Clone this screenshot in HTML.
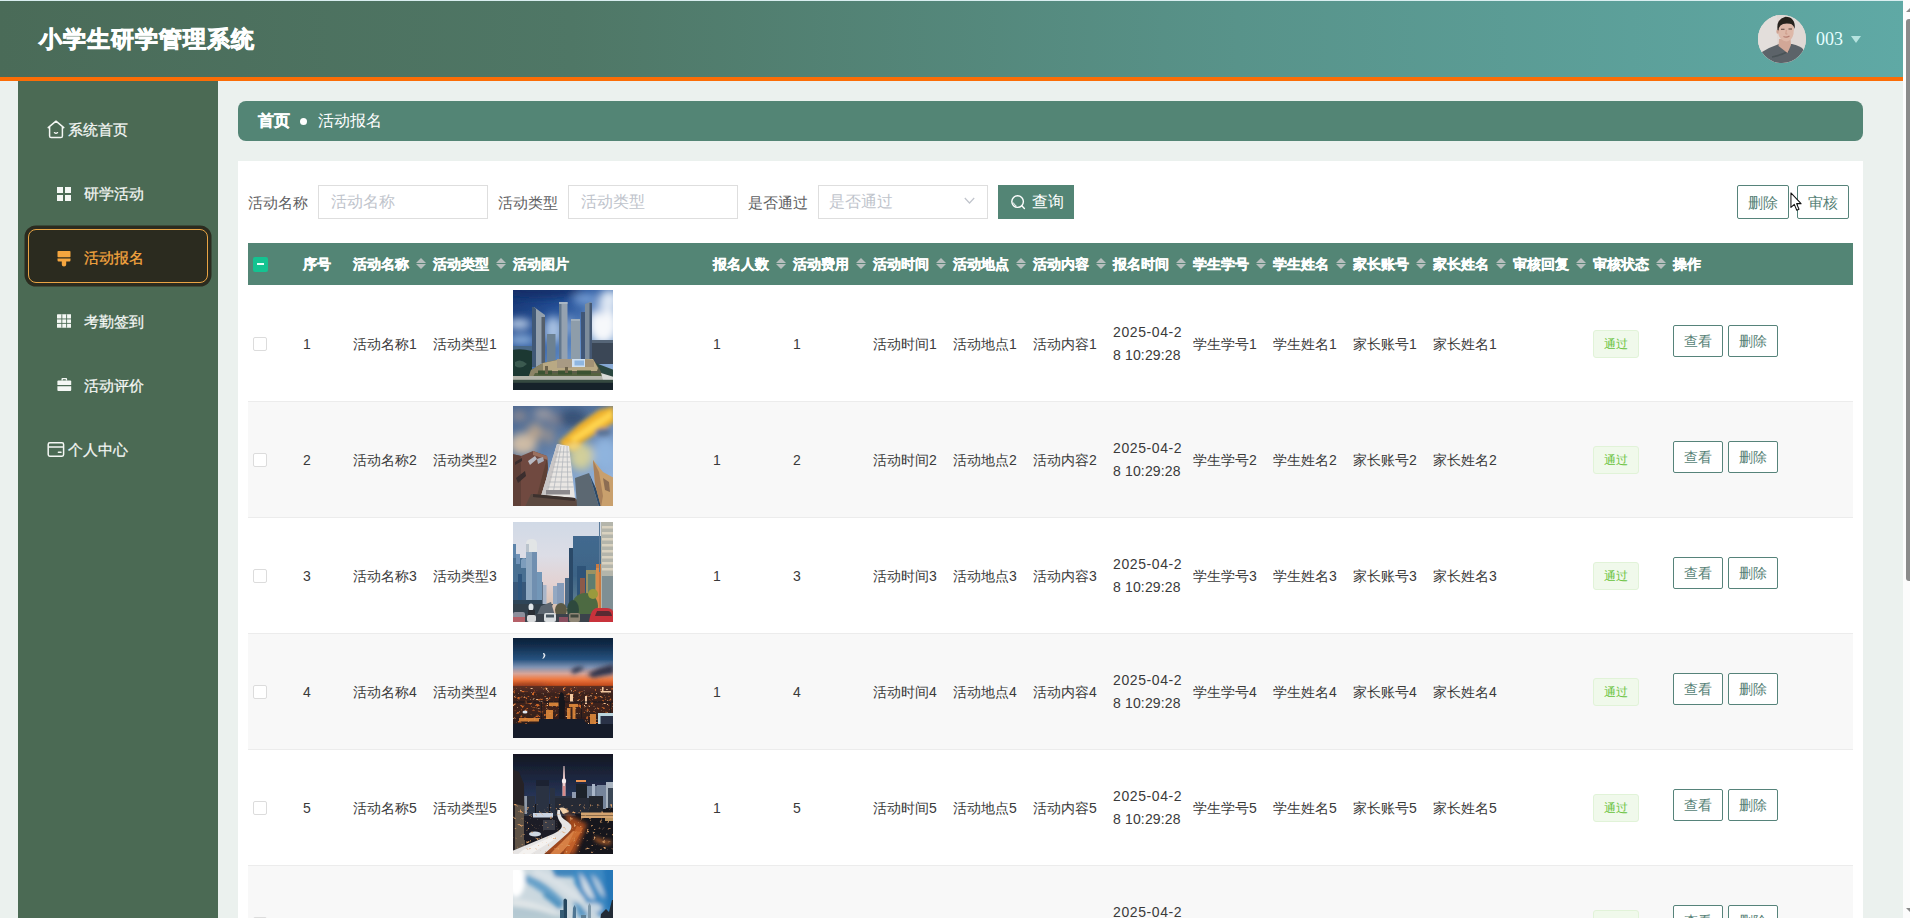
<!DOCTYPE html>
<html lang="zh">
<head>
<meta charset="utf-8">
<title>小学生研学管理系统</title>
<style>
*{box-sizing:border-box;margin:0;padding:0}
html,body{width:1910px;height:918px;overflow:hidden;background:#ebf1ee;font-family:"Liberation Sans",sans-serif;}
body{position:relative}
.abs{position:absolute}
#hdr{position:absolute;left:0;top:0;width:1903px;height:81px;background:linear-gradient(90deg,#4a6b58 0%,#4f7766 30%,#58938a 65%,#5fa9a5 100%);border-bottom:4px solid #fb6d06;border-top:1px solid #d9eef0}
#title{position:absolute;left:38.5px;top:20.5px;font-size:23px;letter-spacing:1px;font-weight:bold;color:#fff;line-height:36px;white-space:nowrap;-webkit-text-stroke:.8px #fff}
#avatar{position:absolute;left:1758px;top:15px;width:48px;height:48px;border-radius:50%;overflow:hidden;background:#e3dcd8}
#uname{position:absolute;left:1816px;top:28px;font-family:"Liberation Serif",serif;font-size:18px;line-height:22px;color:#e6ffff}
#ucaret{position:absolute;left:1851px;top:36px;width:0;height:0;border-left:5px solid transparent;border-right:5px solid transparent;border-top:7px solid #b5e3df}
#sbar{position:absolute;left:1903px;top:0;width:7px;height:918px;background:#fcfcfc;overflow:hidden}
.sarr{position:absolute;left:3px;width:0;height:0;border-left:4.5px solid transparent;border-right:4.5px solid transparent}
#sthumb{position:absolute;left:3px;top:19px;width:6px;height:562px;background:#8b8b8b;border-radius:4px}
#side{position:absolute;left:18px;top:81px;width:200px;height:837px;background:#4b6a54}
.mi{position:absolute;left:0;width:200px;height:30px;color:#f4f7f4;font-size:15px;line-height:30px;white-space:nowrap;-webkit-text-stroke:.25px currentColor}
.mi span{position:absolute;top:0}
.mi svg{position:absolute}
#act{position:absolute;left:10px;top:148px;width:180px;height:54px;background:#2b2b1f;border:1px solid #e9a444;border-radius:8px;box-shadow:0 0 0 3.5px #2b2b1f}
#crumb{position:absolute;left:238px;top:101px;width:1625px;height:40px;background:#538575;border-radius:8px;color:#fff;font-size:16px;line-height:40px;white-space:nowrap}
#panel{position:absolute;left:238px;top:161px;width:1625px;height:757px;background:#fff}
.lbl{position:absolute;top:186px;height:34px;line-height:34px;font-size:15px;color:#5e6062;white-space:nowrap}
.inp{position:absolute;top:185px;width:170px;height:34px;border:1px solid #dedede;background:#fff;font-size:16px;line-height:32px;color:#c0c4cc;padding-left:12px;white-space:nowrap}
.btn{position:absolute;border:1px solid #56837a;color:#567f76;background:#fff;border-radius:2px;text-align:center;white-space:nowrap}
#thead{position:absolute;left:248px;top:243px;width:1605px;height:41.5px;background:#538575}
.th{position:absolute;top:0;height:42px;line-height:42px;font-size:14px;font-weight:bold;color:#fff;white-space:nowrap;-webkit-text-stroke:.35px #fff}
.ct{position:absolute;width:0;height:0;border-left:5px solid transparent;border-right:5px solid transparent}
.row{position:absolute;left:248px;width:1605px;height:116px;border-bottom:1px solid #ececec;background:#fff}
.row.alt{background:#f8f8f8}
.td{position:absolute;top:46px;height:24px;line-height:24px;font-size:14px;color:#3a3a3a;white-space:nowrap}
.cb{position:absolute;left:5px;top:51px;width:14px;height:14px;border:1px solid #dcdcdc;border-radius:2px;background:#fff}
.img{position:absolute;left:265px;top:4px;width:100px;height:100px;overflow:hidden}
.tag{position:absolute;left:1345px;top:44px;width:46px;height:28px;border:1px solid #e1f3d8;background:#f0f9eb;border-radius:3px;color:#67c23a;font-size:12px;line-height:27px;text-align:center}
.rb{top:39px;width:50px;height:32px;line-height:30px;font-size:14px}
</style>
</head>
<body>
<div id="hdr"></div>
<div id="title">小学生研学管理系统</div>
<div id="avatar"><svg width="48" height="48" viewBox="0 0 48 48"><defs><filter id="avb"><feGaussianBlur stdDeviation=".7"/></filter></defs><rect width="48" height="48" fill="#e1d9d5"/><g filter="url(#avb)">
<rect x="0" y="0" width="19" height="48" fill="#e3dedb"/>
<path d="M3 50 L4 37 Q12 32 21 29 L34 29 Q42 31 45 34 L47 50 Z" fill="#5c6469"/>
<path d="M14 42 Q24 40 31 36" stroke="#4a5257" stroke-width="1.5" fill="none"/>
<path d="M21 24 H32.500 L33 30 L29.500 38 L20.500 31 Z" fill="#d2a797"/>
<path d="M19.700 12 Q20 7 28 7 Q36 7 36 12 L35.500 19 Q34 26 28.500 26.500 Q22 26 20.300 19 Z" fill="#deb8a8"/>
<ellipse cx="19.600" cy="16.500" rx="1.200" ry="2.200" fill="#cfa392"/>
<path d="M19.600 15 Q18 4 27.500 1.800 Q37.500 2 36.800 14 Q35.500 9.500 32 8.800 Q25 8 22.500 10.500 Q20.800 12 20.600 15.500 Z" fill="#25221f"/>
<path d="M23 14.200 H26.500 M30.500 14 H34" stroke="#5a4238" stroke-width="1.100"/>
<path d="M25.500 21.500 Q28.500 23 31.500 21" stroke="#b57d70" stroke-width="1.100" fill="none"/>
<path d="M28.300 15 L27.800 19 H29.500" stroke="#c99683" stroke-width=".8" fill="none"/>
</g></svg></div>
<div id="uname">003</div>
<div id="ucaret"></div>
<div id="sbar"><div class="sarr" style="top:7.5px;border-bottom:4.5px solid #8b8b8b"></div><div id="sthumb"></div><div class="sarr" style="top:908px;border-top:4.5px solid #8b8b8b"></div></div>
<div id="side">
<div id="act"></div>
<div class="mi" style="top:34px;color:#f4f7f4"><svg style="left:29px;top:5px" width="18" height="19" viewBox="0 0 18 19" fill="none" stroke="#f4f7f4" stroke-width="1.5" stroke-linejoin="round" stroke-linecap="round"><path d="M1.2 7.6 L9 1.2 L16.8 7.6 M2.6 6.6 V16 Q2.6 17.6 4.2 17.6 H13.8 Q15.4 17.6 15.4 16 V6.6"/><path d="M7.4 12.6 Q9 14 10.6 12.6" stroke-width="1.3"/></svg><span style="left:50px">系统首页</span></div>
<div class="mi" style="top:98px;color:#f4f7f4"><svg style="left:39px;top:8px" width="14" height="14" viewBox="0 0 14 14" fill="#f4f7f4"><rect x="0" y="0" width="6" height="6"/><rect x="8" y="0" width="6" height="6"/><rect x="0" y="8" width="6" height="6"/><rect x="8" y="8" width="6" height="6"/></svg><span style="left:66px">研学活动</span></div>
<div class="mi" style="top:162px;color:#f5a63f"><svg style="left:39px;top:8px" width="14" height="16" viewBox="0 0 14 16" fill="#f5a63f"><rect x="0.5" y="0" width="13" height="6.2" rx="0.8"/><path d="M0.5 7.4 H13.5 V9.2 Q13.5 10.4 12.3 10.4 H9.2 V13.6 Q9.2 15.6 7 15.6 Q4.8 15.6 4.8 13.6 V10.4 H1.7 Q0.5 10.4 0.5 9.2 Z"/></svg><span style="left:66px">活动报名</span></div>
<div class="mi" style="top:226px;color:#f4f7f4"><svg style="left:39px;top:7px" width="14.4" height="14" viewBox="0 0 15 14" fill="#f4f7f4"><rect x="0" y="0" width="15" height="14" rx="0.6"/><g fill="#4b6a54"><rect x="4.6" y="0" width="0.9" height="14"/><rect x="9.6" y="0" width="0.9" height="14"/><rect x="0" y="4.4" width="15" height="0.9"/><rect x="0" y="9" width="15" height="0.9"/></g></svg><span style="left:66px">考勤签到</span></div>
<div class="mi" style="top:290px;color:#f4f7f4"><svg style="left:39px;top:6px" width="14.6" height="15" viewBox="0 0 15 15" fill="#f4f7f4"><path d="M4.6 3.4 V1.8 Q4.6 0.8 5.6 0.8 H9.4 Q10.4 0.8 10.4 1.8 V3.4 H9 V2.2 H6 V3.4 Z"/><path d="M0.4 4.4 Q0.4 3.4 1.4 3.4 H13.6 Q14.6 3.4 14.6 4.4 V8 H0.4 Z"/><path d="M0.4 9.2 H14.6 V13.2 Q14.6 14.2 13.6 14.2 H1.4 Q0.4 14.2 0.4 13.2 Z"/></svg><span style="left:66px">活动评价</span></div>
<div class="mi" style="top:354px;color:#f4f7f4"><svg style="left:29px;top:6px" width="18" height="17" viewBox="0 0 18 17" fill="none" stroke="#f4f7f4" stroke-width="1.5" stroke-linejoin="round"><rect x="1.2" y="1.8" width="15.4" height="13.4" rx="1.6"/><path d="M1.2 6 H16.6"/><path d="M11.4 11.2 H14" stroke-linecap="round"/></svg><span style="left:50px">个人中心</span></div>
</div>
<div id="crumb"><span style="position:absolute;left:20px;font-weight:bold;font-size:16px;-webkit-text-stroke:.3px #fff">首页</span><span style="position:absolute;left:62px;top:17px;width:7px;height:7px;border-radius:50%;background:#fff"></span><span style="position:absolute;left:80px;font-size:16px">活动报名</span></div>
<div id="panel"></div>
<div class="lbl" style="left:248px">活动名称</div>
<div class="inp" style="left:318px">活动名称</div>
<div class="lbl" style="left:498px">活动类型</div>
<div class="inp" style="left:568px">活动类型</div>
<div class="lbl" style="left:748px">是否通过</div>
<div class="inp" style="left:818px;padding-left:10px">是否通过<svg style="position:absolute;left:145px;top:11px" width="11" height="8" viewBox="0 0 11 8" fill="none" stroke="#c0c4cc" stroke-width="1.2"><path d="M0.8 1 L5.5 6 L10.2 1"/></svg></div>
<div class="abs" style="left:998px;top:185px;width:76px;height:34px;background:#538575;color:#fff;font-size:16px;line-height:34px;white-space:nowrap"><svg style="position:absolute;left:12px;top:9px" width="16" height="16" viewBox="0 0 16 16" fill="none" stroke="#fff" stroke-width="1.4"><circle cx="7.6" cy="7.6" r="5.8"/><path d="M11.8 11.8 L14.4 14.4" stroke-linecap="round"/><path d="M3.4 8.6 Q4 11.2 6.4 11.8" stroke-width="1"/></svg><span style="position:absolute;left:34px">查询</span></div>
<div class="btn" style="left:1737px;top:185px;width:52px;height:34px;line-height:33.5px;font-size:15px">删除</div>
<div class="btn" style="left:1797px;top:185px;width:52px;height:34px;line-height:33.5px;font-size:15px">审核</div>
<svg class="abs" style="left:1789.6px;top:192.4px" width="12.2" height="19.7" viewBox="0 0 13 21"><path d="M1 1 V16.5 L4.6 13.2 L7.2 19.4 L9.6 18.4 L7 12.4 H11.8 Z" fill="#fff" stroke="#111" stroke-width="1.1" stroke-linejoin="round"/></svg>
<div id="thead">
<div class="abs" style="left:5px;top:14px;width:14.5px;height:14.5px;background:#14c391;border-radius:2px"><div class="abs" style="left:4px;top:6px;width:6.5px;height:2px;background:#e9fff8"></div></div>
<div class="th" style="left:55px">序号</div>
<div class="th" style="left:105px">活动名称</div>
<div class="ct" style="left:168px;top:14.5px;border-bottom:5px solid #b6bebd"></div>
<div class="ct" style="left:168px;top:21px;border-top:5px solid #b6bebd"></div>
<div class="th" style="left:185px">活动类型</div>
<div class="ct" style="left:248px;top:14.5px;border-bottom:5px solid #b6bebd"></div>
<div class="ct" style="left:248px;top:21px;border-top:5px solid #b6bebd"></div>
<div class="th" style="left:265px">活动图片</div>
<div class="th" style="left:465px">报名人数</div>
<div class="ct" style="left:528px;top:14.5px;border-bottom:5px solid #b6bebd"></div>
<div class="ct" style="left:528px;top:21px;border-top:5px solid #b6bebd"></div>
<div class="th" style="left:545px">活动费用</div>
<div class="ct" style="left:608px;top:14.5px;border-bottom:5px solid #b6bebd"></div>
<div class="ct" style="left:608px;top:21px;border-top:5px solid #b6bebd"></div>
<div class="th" style="left:625px">活动时间</div>
<div class="ct" style="left:688px;top:14.5px;border-bottom:5px solid #b6bebd"></div>
<div class="ct" style="left:688px;top:21px;border-top:5px solid #b6bebd"></div>
<div class="th" style="left:705px">活动地点</div>
<div class="ct" style="left:768px;top:14.5px;border-bottom:5px solid #b6bebd"></div>
<div class="ct" style="left:768px;top:21px;border-top:5px solid #b6bebd"></div>
<div class="th" style="left:785px">活动内容</div>
<div class="ct" style="left:848px;top:14.5px;border-bottom:5px solid #b6bebd"></div>
<div class="ct" style="left:848px;top:21px;border-top:5px solid #b6bebd"></div>
<div class="th" style="left:865px">报名时间</div>
<div class="ct" style="left:928px;top:14.5px;border-bottom:5px solid #b6bebd"></div>
<div class="ct" style="left:928px;top:21px;border-top:5px solid #b6bebd"></div>
<div class="th" style="left:945px">学生学号</div>
<div class="ct" style="left:1008px;top:14.5px;border-bottom:5px solid #b6bebd"></div>
<div class="ct" style="left:1008px;top:21px;border-top:5px solid #b6bebd"></div>
<div class="th" style="left:1025px">学生姓名</div>
<div class="ct" style="left:1088px;top:14.5px;border-bottom:5px solid #b6bebd"></div>
<div class="ct" style="left:1088px;top:21px;border-top:5px solid #b6bebd"></div>
<div class="th" style="left:1105px">家长账号</div>
<div class="ct" style="left:1168px;top:14.5px;border-bottom:5px solid #b6bebd"></div>
<div class="ct" style="left:1168px;top:21px;border-top:5px solid #b6bebd"></div>
<div class="th" style="left:1185px">家长姓名</div>
<div class="ct" style="left:1248px;top:14.5px;border-bottom:5px solid #b6bebd"></div>
<div class="ct" style="left:1248px;top:21px;border-top:5px solid #b6bebd"></div>
<div class="th" style="left:1265px">审核回复</div>
<div class="ct" style="left:1328px;top:14.5px;border-bottom:5px solid #b6bebd"></div>
<div class="ct" style="left:1328px;top:21px;border-top:5px solid #b6bebd"></div>
<div class="th" style="left:1345px">审核状态</div>
<div class="ct" style="left:1408px;top:14.5px;border-bottom:5px solid #b6bebd"></div>
<div class="ct" style="left:1408px;top:21px;border-top:5px solid #b6bebd"></div>
<div class="th" style="left:1425px">操作</div>
</div>
<div class="row" style="top:286px">
<div class="cb"></div>
<div class="td" style="left:55px">1</div>
<div class="td" style="left:105px">活动名称1</div>
<div class="td" style="left:185px">活动类型1</div>
<div class="img"><svg width="100" height="100" viewBox="0 0 100 100"><defs><filter id="p1b" x="-5%" y="-5%" width="110%" height="110%"><feGaussianBlur stdDeviation="0.7"/></filter><filter id="p1B" x="-20%" y="-20%" width="140%" height="140%"><feGaussianBlur stdDeviation="4"/></filter><filter id="p1M" x="-20%" y="-20%" width="140%" height="140%"><feGaussianBlur stdDeviation="2"/></filter><linearGradient id="p1s" x1="0" y1="0" x2="1" y2="1"><stop offset="0" stop-color="#122e68"/><stop offset=".35" stop-color="#27539a"/><stop offset=".6" stop-color="#628dc6"/><stop offset="1" stop-color="#a4bfe0"/></linearGradient></defs><rect width="100" height="100" fill="#888"/><g filter="url(#p1b)">
<rect x="-5" y="-5" width="110" height="110" fill="url(#p1s)"/>
<g filter="url(#p1B)">
<ellipse cx="30" cy="0" rx="40" ry="8" fill="#0f2c66" opacity=".8"/>
<ellipse cx="90" cy="34" rx="15" ry="20" fill="#f6f8fb"/>
<ellipse cx="96" cy="10" rx="10" ry="10" fill="#dfe8f4"/>
<ellipse cx="72" cy="9" rx="12" ry="5" fill="#7fa6dc" opacity=".9"/>
<ellipse cx="84" cy="20" rx="8" ry="3" fill="#6f98d2" opacity=".9"/>
<ellipse cx="6" cy="34" rx="12" ry="5" fill="#bfd2ea"/>
<ellipse cx="40" cy="40" rx="9" ry="14" fill="#b4cbe8" opacity=".9"/>
<ellipse cx="56" cy="36" rx="4" ry="10" fill="#b4cbe8" opacity=".7"/>
<ellipse cx="8" cy="50" rx="14" ry="5" fill="#8fb2dc"/>
</g>
<rect x="79" y="50" width="22" height="24" fill="#3a4757"/>
<rect x="79" y="50" width="22" height="3" fill="#566678"/>
<path d="M-1 56 H19 V62 H-1 Z" fill="#4a6786"/>
<path d="M-1 60 Q8 58 19 61 V88 H-1 Z" fill="#1e3733"/>
<path d="M2 72 Q8 68 14 74 Q8 80 2 76 Z" fill="#3a5a50"/>
<path d="M80 72 L101 80 V90 H80 Z" fill="#2c463f"/>
<path d="M19 17 L21 17 L32 25 V77 H19 Z" fill="#93a0ad"/>
<path d="M19 17 L21 17 L23 19 V77 H19 Z" fill="#3f5876"/>
<rect x="28.500" y="27" width="3.500" height="46" fill="#555f6a"/>
<rect x="34" y="44" width="8.500" height="32" fill="#6c8192"/>
<rect x="46" y="12" width="8.500" height="57" fill="#95a2b0"/>
<rect x="46" y="12" width="2.500" height="57" fill="#64788e"/>
<rect x="46" y="12" width="8.500" height="2" fill="#a9b6c4"/>
<rect x="58" y="29" width="9" height="40" fill="#8e9daa"/>
<rect x="58" y="29" width="9" height="2" fill="#a2b0bd"/>
<rect x="68" y="22" width="4" height="47" fill="#3f5777"/>
<path d="M72 14 L77 12 L79 13 V69 H72 Z" fill="#7d8c9b"/>
<rect x="76.500" y="13" width="2.500" height="56" fill="#445973"/>
<path d="M18 80 L30 73 L44 70 L80 69 L86 78 L90 86 H16 Z" fill="#5a5c48"/><path d="M22 79 L30 73 L44 70 L80 69 L85 78 L84 81 H22 Z" fill="#b9a984"/>
<path d="M18 80 L30 73 L30 86 H16 Z" fill="#8c8466"/>
<rect x="44" y="69" width="15" height="9" fill="#a89a84"/>
<rect x="59" y="69" width="13" height="8" fill="#cfe0f2"/>
<rect x="61.500" y="70.500" width="9.500" height="5" fill="#8fb6e0"/>
<rect x="72" y="70" width="9" height="7" fill="#a39274"/>
<path d="M22 83 H88 L90 87 H20 Z" fill="#55623f"/>
<rect x="25" y="80.500" width="14" height="4" fill="#3a5230"/>
<rect x="45" y="80.500" width="14" height="4" fill="#3a5230"/>
<rect x="64" y="80.500" width="14" height="4" fill="#3a5230"/>
<rect x="32" y="76" width="3" height="8" fill="#6d644c"/><rect x="52" y="77" width="3" height="6" fill="#6d644c"/>
<path d="M-1 86 H88 L101 90 V94 H-1 Z" fill="#b3b4aa"/>
<path d="M88 83 L101 87 V93 L90 90 Z" fill="#d8dad6"/>
<rect x="-1" y="91.500" width="102" height="10" fill="#17242a"/>
<rect x="-1" y="89.800" width="102" height="3" fill="#34493f"/>
</g></svg></div>
<div class="td" style="left:465px">1</div>
<div class="td" style="left:545px">1</div>
<div class="td" style="left:625px">活动时间1</div>
<div class="td" style="left:705px">活动地点1</div>
<div class="td" style="left:785px">活动内容1</div>
<div class="td" style="left:865px;top:34.5px;height:48px;line-height:23.5px;letter-spacing:.6px">2025-04-2<br><span style="letter-spacing:.15px">8 10:29:28</span></div>
<div class="td" style="left:945px">学生学号1</div>
<div class="td" style="left:1025px">学生姓名1</div>
<div class="td" style="left:1105px">家长账号1</div>
<div class="td" style="left:1185px">家长姓名1</div>
<div class="tag">通过</div>
<div class="btn rb" style="left:1425px">查看</div>
<div class="btn rb" style="left:1480px">删除</div>
</div>
<div class="row alt" style="top:402px">
<div class="cb"></div>
<div class="td" style="left:55px">2</div>
<div class="td" style="left:105px">活动名称2</div>
<div class="td" style="left:185px">活动类型2</div>
<div class="img"><svg width="100" height="100" viewBox="0 0 100 100"><defs><filter id="p2b" x="-5%" y="-5%" width="110%" height="110%"><feGaussianBlur stdDeviation="0.7"/></filter><filter id="p2B" x="-20%" y="-20%" width="140%" height="140%"><feGaussianBlur stdDeviation="4"/></filter><filter id="p2M" x="-20%" y="-20%" width="140%" height="140%"><feGaussianBlur stdDeviation="2"/></filter><linearGradient id="p2s" x1="0" y1="0" x2=".6" y2="1"><stop offset="0" stop-color="#4a6690"/><stop offset=".4" stop-color="#55739c"/><stop offset=".7" stop-color="#7b9cc7"/><stop offset="1" stop-color="#9dbde4"/></linearGradient></defs><rect width="100" height="100" fill="#888"/><g filter="url(#p2b)">
<rect x="-5" y="-5" width="110" height="110" fill="url(#p2s)"/>
<g filter="url(#p2B)">
<ellipse cx="10" cy="38" rx="14" ry="11" fill="#cdbba6"/><ellipse cx="30" cy="8" rx="10" ry="6" fill="#a9a3a4" opacity=".8"/>
<ellipse cx="22" cy="26" rx="8" ry="9" fill="#bca58e" opacity=".9"/>
<ellipse cx="6" cy="10" rx="8" ry="5" fill="#8f8a90"/>
<ellipse cx="42" cy="14" rx="8" ry="5" fill="#8c8790" opacity=".8"/>
<ellipse cx="36" cy="30" rx="6" ry="8" fill="#9f9590" opacity=".8"/>
<ellipse cx="60" cy="12" rx="14" ry="9" fill="#2f4a6e" opacity=".8"/>
<ellipse cx="68" cy="50" rx="12" ry="14" fill="#dcd596" opacity=".9"/>
<ellipse cx="92" cy="48" rx="12" ry="16" fill="#8fb4de"/>
</g><g filter="url(#p2M)">
<path d="M46 36 L66 18 L86 4 L101 0 L102 16 L84 27 L62 41 L50 42 Z" fill="#eeb02c"/>
<path d="M56 33 L80 16 L99 4 L100 11 L80 25 L62 36 Z" fill="#ffd44e"/>
<path d="M50 40 L62 36 L70 40 L60 46 Z" fill="#f0d274"/>
<ellipse cx="90" cy="26" rx="8" ry="4" fill="#5d7597"/>
</g>
<path d="M-1 48 L8 50 L20 45 L34 50 L35 62 L30 90 L18 101 H-1 Z" fill="#6f4a3f"/><path d="M34 52 L35 62 L30 90 L24 90 Z" fill="#5f4036"/>
<path d="M-1 48 L8 50 L8 101 H-1 Z" fill="#5e4038"/>
<path d="M20 45 L34 50 L35 54 L20 49 Z" fill="#9a6f5e"/>
<path d="M15 55 L22 50 L24 53 L17 59 Z" fill="#b9b9c2"/><path d="M24 53 L30 51 L31 55 L25 58 Z" fill="#a9acb8"/>
<path d="M3 72 L12 65 L13 70 L5 77 Z" fill="#3a2d2e"/><path d="M2 56 L9 52 L9 55 L2 59 Z" fill="#3a2d2e"/>
<path d="M44 38 L56 40 L62 92 L28 90 Z" fill="#e9e6e3"/>
<path d="M44 38 L47 38.500 L34 90 L28 90 Z" fill="#c9c6c6"/>
<g stroke="#9aa0aa" stroke-width=".7" opacity=".75"><path d="M43 46 H56 M42 51 H57 M41 56 H57.500 M40 61 H58 M38.500 66 H58.500 M37 71 H59 M36 76 H60 M34.500 81 H60.500"/><path d="M48 40 L40 88 M51 40 L47 88 M54 40 L55 88"/></g>
<rect x="33" y="84" width="24" height="4.500" fill="#8d8a8e"/>
<path d="M18 88 L62 92 L72 101 H12 Z" fill="#5b4840"/>
<path d="M20 88 L62 92 L62 95 L20 91 Z" fill="#3e302e"/>
<path d="M62 72 L76 67 L86 101 H64 Z" fill="#5b6872"/>
<path d="M76 67 L86 101 H92 L80 76 Z" fill="#2f4a66"/>
<path d="M80 54 L90 66 L101 72 V101 H88 L82 78 Z" fill="#c9a06d"/>
<path d="M80 54 L86 66 L90 90 L88 101 L82 78 Z" fill="#a9805a"/>
<path d="M90 72 L96 76 L97 86 L92 84 Z" fill="#8c6d52"/>
</g></svg></div>
<div class="td" style="left:465px">1</div>
<div class="td" style="left:545px">2</div>
<div class="td" style="left:625px">活动时间2</div>
<div class="td" style="left:705px">活动地点2</div>
<div class="td" style="left:785px">活动内容2</div>
<div class="td" style="left:865px;top:34.5px;height:48px;line-height:23.5px;letter-spacing:.6px">2025-04-2<br><span style="letter-spacing:.15px">8 10:29:28</span></div>
<div class="td" style="left:945px">学生学号2</div>
<div class="td" style="left:1025px">学生姓名2</div>
<div class="td" style="left:1105px">家长账号2</div>
<div class="td" style="left:1185px">家长姓名2</div>
<div class="tag">通过</div>
<div class="btn rb" style="left:1425px">查看</div>
<div class="btn rb" style="left:1480px">删除</div>
</div>
<div class="row" style="top:518px">
<div class="cb"></div>
<div class="td" style="left:55px">3</div>
<div class="td" style="left:105px">活动名称3</div>
<div class="td" style="left:185px">活动类型3</div>
<div class="img"><svg width="100" height="100" viewBox="0 0 100 100"><defs><filter id="p3b" x="-5%" y="-5%" width="110%" height="110%"><feGaussianBlur stdDeviation="0.7"/></filter><filter id="p3B" x="-20%" y="-20%" width="140%" height="140%"><feGaussianBlur stdDeviation="4"/></filter><filter id="p3M" x="-20%" y="-20%" width="140%" height="140%"><feGaussianBlur stdDeviation="2"/></filter><linearGradient id="p3s" x1="0" y1="0" x2="0" y2="1"><stop offset="0" stop-color="#cfd9e6"/><stop offset=".35" stop-color="#dcdde6"/><stop offset=".6" stop-color="#e3d2d2"/><stop offset=".85" stop-color="#d9c0ae"/></linearGradient>
<linearGradient id="p3g" x1="0" y1="0" x2="0" y2="1"><stop offset="0" stop-color="#42698f"/><stop offset=".6" stop-color="#3d6486"/><stop offset="1" stop-color="#5b7b90"/></linearGradient></defs><rect width="100" height="100" fill="#888"/><g filter="url(#p3b)">
<rect x="-5" y="-5" width="110" height="110" fill="url(#p3s)"/>
<rect x="30" y="63" width="3.500" height="20" fill="#a9b6ca"/>
<rect x="40" y="64" width="4" height="18" fill="#93a8c2"/><rect x="44" y="61" width="7" height="22" fill="#869cba"/>
<rect x="52" y="56" width="5" height="30" fill="#4f6a86"/>
<rect x="0" y="22" width="3" height="70" fill="#5d84aa"/>
<rect x="0" y="36" width="16" height="50" fill="#4a6f92"/><rect x="0" y="60" width="30" height="24" fill="#2f5070" opacity=".7"/>
<rect x="3" y="32" width="4" height="10" fill="#6f93b8"/>
<path d="M8 38 Q11 34 14 38 V46 H8 Z" fill="#7d9dbc"/>
<rect x="5" y="52" width="4" height="30" fill="#2f567e"/>
<path d="M13 22 Q13 17 18.500 17 Q24 17 24 22 V78 H13 Z" fill="#e2e5e6"/><rect x="13" y="22" width="3" height="10" fill="#b9c3cc"/>
<rect x="13" y="30" width="11" height="50" fill="#8fa9c2"/>
<rect x="19" y="30" width="5" height="50" fill="#6f8fb0"/>
<rect x="24" y="50" width="5" height="32" fill="#7397b8"/>
<rect x="56" y="26" width="4.500" height="56" fill="#2b4a68"/>
<rect x="60" y="14" width="28" height="66" fill="url(#p3g)"/>
<rect x="64" y="44" width="9" height="34" fill="#2f5378"/>
<rect x="67" y="56" width="5" height="22" fill="#8c5a4a"/>
<rect x="73" y="48" width="10" height="30" fill="#9a9264"/>
<rect x="75" y="52" width="7" height="22" fill="#5f7d70"/>
<rect x="83" y="42" width="7" height="48" fill="#c87a42"/>
<rect x="83" y="46" width="3" height="44" fill="#d98c4c"/>
<rect x="88" y="-1" width="13" height="92" fill="#b4b5ab"/>
<g fill="#d9d2c0"><rect x="89" y="4" width="12" height="2.500"/><rect x="89" y="10" width="12" height="2.500"/><rect x="89" y="16" width="12" height="2.500"/><rect x="89" y="22" width="12" height="2.500"/><rect x="89" y="28" width="12" height="2.500"/><rect x="89" y="34" width="12" height="2.500"/><rect x="89" y="40" width="12" height="2.500"/><rect x="89" y="46" width="12" height="2.500"/></g>
<rect x="89" y="54" width="12" height="36" fill="#7f8f94"/>
<rect x="86" y="0" width="1" height="50" fill="#5a7a9a"/>
<ellipse cx="72" cy="84" rx="13" ry="13" fill="#4d6a42"/>
<ellipse cx="80" cy="72" rx="5" ry="5" fill="#9a9a3c"/>
<ellipse cx="60" cy="88" rx="6" ry="10" fill="#2f4a3c"/>
<ellipse cx="48" cy="88" rx="6" ry="7" fill="#5b5a44"/>
<rect x="-1" y="78" width="30" height="14" fill="#2f4458"/>
<path d="M-1 82 H40 L30 101 H-1 Z" fill="#33404c"/>
<path d="M28 84 L38 80 L44 101 H20 Z" fill="#5d6670"/>
<rect x="-1" y="92" width="102" height="9" fill="#3b434c"/>
<rect x="0" y="90" width="12" height="10" rx="2" fill="#8d8f9c"/><rect x="0" y="95" width="12" height="5" fill="#b56068"/>
<ellipse cx="18" cy="85" rx="2.500" ry="3.500" fill="#dfe6ea"/><rect x="15" y="88" width="7" height="9" fill="#2a2f36"/>
<rect x="14" y="93" width="9" height="7" rx="2" fill="#d8dadc"/>
<rect x="31" y="91" width="12" height="9" rx="2" fill="#d9dde0"/><rect x="33" y="92.500" width="8" height="3" fill="#4a5660"/>
<rect x="46" y="95" width="9" height="5" fill="#8a5060"/>
<rect x="56" y="91" width="11" height="9" rx="2" fill="#8f8674"/><rect x="57.500" y="92.500" width="8" height="3" fill="#3f463e"/>
<path d="M76 100 Q78 86 84 86 H94 Q100 86 101 92 V101 H76 Z" fill="#c8333a"/>
<path d="M84 89 H95 Q98 89 99 94 H82 Z" fill="#5a2a30"/>
</g></svg></div>
<div class="td" style="left:465px">1</div>
<div class="td" style="left:545px">3</div>
<div class="td" style="left:625px">活动时间3</div>
<div class="td" style="left:705px">活动地点3</div>
<div class="td" style="left:785px">活动内容3</div>
<div class="td" style="left:865px;top:34.5px;height:48px;line-height:23.5px;letter-spacing:.6px">2025-04-2<br><span style="letter-spacing:.15px">8 10:29:28</span></div>
<div class="td" style="left:945px">学生学号3</div>
<div class="td" style="left:1025px">学生姓名3</div>
<div class="td" style="left:1105px">家长账号3</div>
<div class="td" style="left:1185px">家长姓名3</div>
<div class="tag">通过</div>
<div class="btn rb" style="left:1425px">查看</div>
<div class="btn rb" style="left:1480px">删除</div>
</div>
<div class="row alt" style="top:634px">
<div class="cb"></div>
<div class="td" style="left:55px">4</div>
<div class="td" style="left:105px">活动名称4</div>
<div class="td" style="left:185px">活动类型4</div>
<div class="img"><svg width="100" height="100" viewBox="0 0 100 100"><defs><filter id="p4b" x="-5%" y="-5%" width="110%" height="110%"><feGaussianBlur stdDeviation="0.7"/></filter><filter id="p4B" x="-20%" y="-20%" width="140%" height="140%"><feGaussianBlur stdDeviation="4"/></filter><filter id="p4M" x="-20%" y="-20%" width="140%" height="140%"><feGaussianBlur stdDeviation="2"/></filter><linearGradient id="p4s" x1="0" y1="0" x2="0" y2="1"><stop offset="0" stop-color="#0c1b2e"/><stop offset=".12" stop-color="#122e4e"/><stop offset=".24" stop-color="#27527f"/><stop offset=".31" stop-color="#7f93b3"/><stop offset=".37" stop-color="#d9a597"/><stop offset=".42" stop-color="#ee7a42"/><stop offset=".47" stop-color="#c9501f"/><stop offset=".5" stop-color="#6d3020"/></linearGradient>
<linearGradient id="p4c" x1="0" y1="0" x2="0" y2="1"><stop offset="0" stop-color="#5d2f22"/><stop offset=".2" stop-color="#3b231f"/><stop offset=".6" stop-color="#3f241c"/><stop offset="1" stop-color="#241a1c"/></linearGradient>
<filter id="p4n" x="0" y="0" width="100%" height="100%" color-interpolation-filters="sRGB"><feTurbulence type="fractalNoise" baseFrequency="0.26 0.36" numOctaves="2" seed="7"/><feColorMatrix type="matrix" values="0 0 0 0 0.82  0 0 0 0 0.4  0 0 0 0 0.15  6 0 0 0 -3.55"/></filter>
<filter id="p4n2" x="0" y="0" width="100%" height="100%" color-interpolation-filters="sRGB"><feTurbulence type="fractalNoise" baseFrequency="0.3 0.4" numOctaves="2" seed="21"/><feColorMatrix type="matrix" values="0 0 0 0 0.96  0 0 0 0 0.78  0 0 0 0 0.6  0 7 0 0 -4.7"/></filter></defs><rect width="100" height="100" fill="#888"/><g filter="url(#p4b)">
<rect x="-5" y="-5" width="110" height="110" fill="url(#p4s)"/>
<g filter="url(#p4M)">
<path d="M58 32 Q66 26 72 30 Q66 34 60 36 Z" fill="#2b3550"/>
<path d="M74 36 Q88 28 101 26 V36 Q88 38 80 40 Z" fill="#33344c"/>
<path d="M0 47 Q20 45 40 47.500 L0 49 Z" fill="#7a3424"/>
</g>
<path d="M30.500 15 Q33.500 17.500 30 20.500 Q32 18 30.500 15 Z" fill="#f3f6fb" stroke="#f3f6fb" stroke-width=".8"/>
<rect x="-1" y="48" width="102" height="40" fill="url(#p4c)"/>
<rect x="-1" y="49" width="102" height="37" fill="#e0813a" filter="url(#p4n)"/>
<rect x="-1" y="49" width="102" height="37" fill="#f6d2a8" filter="url(#p4n2)"/>
<g filter="url(#p4b)">
<g fill="#e08a3c" opacity=".9"><rect x="36" y="64" width="10" height="4"/><rect x="56" y="66" width="9" height="3"/><rect x="33" y="72" width="7" height="9"/><rect x="54" y="70" width="3.500" height="14"/><rect x="59.500" y="68" width="3" height="16" /><rect x="77" y="76" width="6" height="10"/><rect x="6" y="80" width="20" height="3.500"/></g>
<g fill="#f2c9a2"><rect x="57" y="56" width="3" height="8"/><rect x="72" y="58" width="2" height="8"/><rect x="88" y="53" width="10" height="1.500"/><rect x="89" y="49" width="1.500" height="4"/></g>
<ellipse cx="12" cy="74" rx="2.500" ry="1.500" fill="#dfe8f2"/>
</g>
<rect x="-1" y="63.500" width="102" height="1" fill="#1c1820"/>
<rect x="28" y="64" width=".8" height="20" fill="#1c1820"/><rect x="68" y="64" width=".8" height="20" fill="#1c1820"/><rect x="97" y="64" width=".8" height="22" fill="#1c1820"/>
<path d="M46.500 56 Q48.500 52 50.500 56 L52 64 L51.500 82 H46 L45.500 64 Z" fill="#17141c"/>
<rect x="85" y="75" width="16" height="11" fill="#2b3346"/><path d="M85 75 H101 V78 H87.500 V86 H85 Z" fill="#bcd6de"/>
<path d="M28 81 H70 L74 86 H101 V101 H-1 V86 H24 Z" fill="#171b2b"/>
<rect x="-1" y="86" width="102" height="15" fill="#171b2b"/>
</g></svg></div>
<div class="td" style="left:465px">1</div>
<div class="td" style="left:545px">4</div>
<div class="td" style="left:625px">活动时间4</div>
<div class="td" style="left:705px">活动地点4</div>
<div class="td" style="left:785px">活动内容4</div>
<div class="td" style="left:865px;top:34.5px;height:48px;line-height:23.5px;letter-spacing:.6px">2025-04-2<br><span style="letter-spacing:.15px">8 10:29:28</span></div>
<div class="td" style="left:945px">学生学号4</div>
<div class="td" style="left:1025px">学生姓名4</div>
<div class="td" style="left:1105px">家长账号4</div>
<div class="td" style="left:1185px">家长姓名4</div>
<div class="tag">通过</div>
<div class="btn rb" style="left:1425px">查看</div>
<div class="btn rb" style="left:1480px">删除</div>
</div>
<div class="row" style="top:750px">
<div class="cb"></div>
<div class="td" style="left:55px">5</div>
<div class="td" style="left:105px">活动名称5</div>
<div class="td" style="left:185px">活动类型5</div>
<div class="img"><svg width="100" height="100" viewBox="0 0 100 100"><defs><filter id="p5b" x="-5%" y="-5%" width="110%" height="110%"><feGaussianBlur stdDeviation="0.7"/></filter><filter id="p5B" x="-20%" y="-20%" width="140%" height="140%"><feGaussianBlur stdDeviation="4"/></filter><filter id="p5M" x="-20%" y="-20%" width="140%" height="140%"><feGaussianBlur stdDeviation="2"/></filter><linearGradient id="p5s" x1="0" y1="0" x2="0" y2="1"><stop offset="0" stop-color="#12151f"/><stop offset=".2" stop-color="#1a2236"/><stop offset=".45" stop-color="#27365a"/><stop offset=".6" stop-color="#2a3450"/></linearGradient>
<filter id="p5n" x="0" y="0" width="100%" height="100%" color-interpolation-filters="sRGB"><feTurbulence type="fractalNoise" baseFrequency="0.3 0.3" numOctaves="2" seed="11"/><feColorMatrix type="matrix" values="0 0 0 0 0.86  0 0 0 0 0.62  0 0 0 0 0.4  6 0 0 0 -3.9"/></filter></defs><rect width="100" height="100" fill="#888"/><g filter="url(#p5b)">
<rect x="-5" y="-5" width="110" height="110" fill="url(#p5s)"/>
<rect x="-1" y="50" width="102" height="51" fill="#15161e"/>
<g fill="#2a3242"><rect x="10" y="42" width="12" height="24"/><rect x="23" y="26" width="13" height="36"/><rect x="37" y="34" width="5" height="28"/><rect x="42" y="42" width="20" height="20"/></g>
<rect x="10" y="42" width="4" height="18" fill="#8f99a8"/>
<rect x="23" y="26" width="13" height="6" fill="#1c2230"/>
<rect x="59" y="38" width="5" height="10" fill="#8f9bb0"/>
<rect x="63" y="30" width="11" height="26" fill="#1d212c"/>
<rect x="63" y="26" width="10" height="2" fill="#ec9452"/>
<rect x="74" y="32" width="10" height="16" fill="#6d7c92"/><rect x="79" y="30" width="3" height="12" fill="#a9b6c8"/>
<rect x="84" y="31" width="9" height="24" fill="#74849a"/>
<rect x="93" y="28" width="8" height="26" fill="#a9b4c0"/><rect x="95" y="34" width="6" height="20" fill="#3b4656"/>
<rect x="76" y="42" width="14" height="18" fill="#23262f"/>
<rect x="42" y="44" width="34" height="16" fill="#262a36"/>
<path d="M50.500 12 L51.500 12 L52 24 L53 27 L52.500 30 L52.500 42 H49.500 L49.500 30 L49 27 L50 24 Z" fill="#eccaca"/>
<ellipse cx="51" cy="27" rx="2.200" ry="2.200" fill="#f5eef0"/>
<rect x="49.800" y="32" width="2.400" height="10" fill="#d98a8a"/>
<path d="M-1 15 L6 18 L11 30 L12 96 L-1 101 Z" fill="#262425"/>
<path d="M2 50 L11 52 L12 92 L2 96 Z" fill="#5f5247"/>
<rect x="11" y="62" width="34" height="24" fill="#1c1e28"/>
<rect x="20" y="59" width="20" height="4.500" fill="#c9d3e2"/>
<rect x="30" y="66" width="12" height="10" fill="#3b3c46"/>
<ellipse cx="22" cy="80" rx="6" ry="2.500" fill="#cfd8e2"/>
<rect x="68" y="58.500" width="33" height="5.500" fill="#d3a370"/><rect x="68" y="61" width="33" height="1" fill="#8a6a48"/>
<rect x="92" y="64" width="9" height="3" fill="#b9935f"/>
<g filter="url(#p5M)">
<path d="M52 58 Q64 66 74 70 L62 101 H24 L56 76 Z" fill="#b4501d" opacity=".9"/>
<path d="M82 84 Q90 90 98 88" stroke="#d8702c" stroke-width="3" fill="none"/>
</g>
<path d="M47 56 Q46 63 55 68 Q62 73 55 79 L30 101 H-1 V97 L40 80 Q53 74 47 68 Q43 62 44.500 56 Z" fill="#e6e4e3"/>
<path d="M10 96 L40 82 L44 84 L16 101 H4 Z" fill="#f4f2f0"/>
<path d="M60 77 L36 101 H46 L68 78 Z" fill="#e08a4c" opacity=".85"/>
<path d="M64 72 L70 74 L56 101 H50 Z" fill="#c9682c" opacity=".8"/>
<path d="M46 54 Q52 52 56 58 L50 60 Z" fill="#f0cfa8"/>
<rect x="-1" y="50" width="102" height="51" fill="#e0813a" filter="url(#p5n)"/>
</g></svg></div>
<div class="td" style="left:465px">1</div>
<div class="td" style="left:545px">5</div>
<div class="td" style="left:625px">活动时间5</div>
<div class="td" style="left:705px">活动地点5</div>
<div class="td" style="left:785px">活动内容5</div>
<div class="td" style="left:865px;top:34.5px;height:48px;line-height:23.5px;letter-spacing:.6px">2025-04-2<br><span style="letter-spacing:.15px">8 10:29:28</span></div>
<div class="td" style="left:945px">学生学号5</div>
<div class="td" style="left:1025px">学生姓名5</div>
<div class="td" style="left:1105px">家长账号5</div>
<div class="td" style="left:1185px">家长姓名5</div>
<div class="tag">通过</div>
<div class="btn rb" style="left:1425px">查看</div>
<div class="btn rb" style="left:1480px">删除</div>
</div>
<div class="row alt" style="top:866px">
<div class="cb"></div>
<div class="img"><svg width="100" height="100" viewBox="0 0 100 100"><defs><filter id="p6b" x="-5%" y="-5%" width="110%" height="110%"><feGaussianBlur stdDeviation="0.7"/></filter><filter id="p6B" x="-20%" y="-20%" width="140%" height="140%"><feGaussianBlur stdDeviation="4"/></filter><filter id="p6M" x="-20%" y="-20%" width="140%" height="140%"><feGaussianBlur stdDeviation="2"/></filter></defs><rect width="100" height="100" fill="#888"/><g filter="url(#p6b)">
<rect x="-5" y="-5" width="110" height="110" fill="#cbd8df"/>
<g filter="url(#p6M)">
<path d="M58 -4 H104 V46 H86 Q72 32 62 14 Z" fill="#3d8ac3"/>
<path d="M90 -4 H104 V40 H94 Z" fill="#2677b8"/>
<path d="M38 -4 H62 L60 7 H42 Z" fill="#3f86bd"/>
<path d="M12 5 Q30 9 52 32 L47 37 Q30 22 12 12 Z" fill="#66a0c9"/>
<path d="M32 22 Q40 27 50 36 L46 39 Q38 32 30 26 Z" fill="#4a8fbe"/>
<ellipse cx="3" cy="10" rx="9" ry="17" fill="#ffffff"/>
<path d="M22 -2 Q50 8 72 30 Q62 33 52 24 Q36 10 20 5 Z" fill="#d9e1e6"/>
<path d="M66 2 Q76 12 82 30 Q76 30 70 18 Z" fill="#d3dee6"/>
<path d="M78 4 Q88 10 92 28 Q86 24 82 14 Z" fill="#b9cfe0"/>
<ellipse cx="80" cy="38" rx="9" ry="5" fill="#c6d6e2"/>
<path d="M60 30 Q70 36 76 46 L66 48 Z" fill="#5a98c4"/>
<path d="M-2 28 Q28 32 48 44 L-2 50 Z" fill="#dfe5e7"/>
<path d="M-2 36 Q20 38 44 46 L-2 48 Z" fill="#b3c8d2"/>
<path d="M-2 46 H50 V62 H-2 Z" fill="#b7cbd2"/>
</g>
<path d="M50.500 30 Q52 27 54 30 V60 H50.500 Z" fill="#27475e"/>
<rect x="47" y="40" width="4" height="20" fill="#365b74"/>
<path d="M60 38 L61.500 35 L63 38 V60 H59 Z" fill="#4f7794"/>
<path d="M75 36 L76.500 33 L78 36 V60 H75 Z" fill="#8099aa"/>
<path d="M88 44 L93 39 L96 42 L99 30 L101 30 V60 H86 Z" fill="#222c34"/>
<rect x="68" y="45" width="5" height="15" fill="#5d7f96"/>
</g></svg></div>
<div class="td" style="left:865px;top:34.5px;height:48px;line-height:23.5px;letter-spacing:.6px">2025-04-2<br><span style="letter-spacing:.15px">8 10:29:28</span></div>
<div class="tag">通过</div>
<div class="btn rb" style="left:1425px">查看</div>
<div class="btn rb" style="left:1480px">删除</div>
</div>
</body>
</html>
